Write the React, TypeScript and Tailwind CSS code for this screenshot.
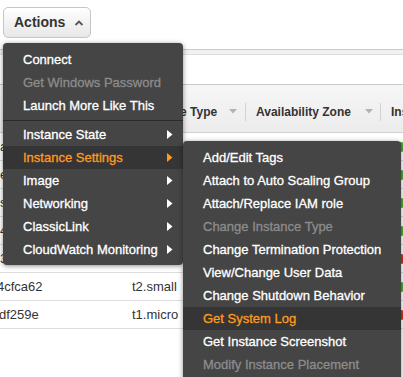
import React from "react";

type Item = { label: string; disabled?: boolean; active?: boolean; sub?: boolean };

const mainTop: Item[] = [
  { label: "Connect" },
  { label: "Get Windows Password", disabled: true },
  { label: "Launch More Like This" },
];

const mainBottom: Item[] = [
  { label: "Instance State", sub: true },
  { label: "Instance Settings", sub: true, active: true },
  { label: "Image", sub: true },
  { label: "Networking", sub: true },
  { label: "ClassicLink", sub: true },
  { label: "CloudWatch Monitoring", sub: true },
];

const settings: Item[] = [
  { label: "Add/Edit Tags" },
  { label: "Attach to Auto Scaling Group" },
  { label: "Attach/Replace IAM role" },
  { label: "Change Instance Type", disabled: true },
  { label: "Change Termination Protection" },
  { label: "View/Change User Data" },
  { label: "Change Shutdown Behavior" },
  { label: "Get System Log", active: true },
  { label: "Get Instance Screenshot" },
  { label: "Modify Instance Placement", disabled: true },
];

const rows = [
  { id: "a3e81b07", type: "t2.micro", state: "bg-[#3fae2a]" },
  { id: "e1d09c4b", type: "t2.micro", state: "bg-[#3fae2a]" },
  { id: "s7f2a9d1", type: "t2.medium", state: "bg-[#3fae2a]" },
  { id: "4b60e3aa", type: "t2.small", state: "bg-[#3fae2a]" },
  { id: "3c5d7e20", type: "t2.micro", state: "bg-[#d13212]" },
  { id: "4cfca62", type: "t2.small", state: "bg-[#3fae2a]", ml: "-ml-[3px]" },
  { id: "df259e", type: "t1.micro", state: "bg-[#d13212]", ml: "-ml-[1px]" },
];

function Arrow({ color }: { color: string }) {
  return (
    <svg width="6" height="9" viewBox="0 0 6 9">
      <polygon points="0,0 5.5,4.5 0,9" fill={color} />
    </svg>
  );
}

function Caret() {
  return (
    <svg width="8" height="5" viewBox="0 0 8 5">
      <polygon points="0,0 8,0 4,4.5" fill="#b3b3b3" />
    </svg>
  );
}

function MenuRow({ item }: { item: Item }) {
  const color = item.active ? "text-[#ff9a1f]" : item.disabled ? "text-[#8c8c8c]" : "text-white";
  return (
    <div
      className={`flex h-[23px] items-center justify-between pl-[20px] pr-[10px] text-[13px] ${color} ${
        item.active ? "bg-[#353535]" : ""
      }`}
    >
      <span className="whitespace-nowrap [-webkit-text-stroke:0.3px_currentColor]">{item.label}</span>
      {item.sub && <Arrow color={item.active ? "#ff9a1f" : "#ffffff"} />}
    </div>
  );
}

export default function App() {
  return (
    <div className="relative h-[377px] w-[403px] overflow-hidden bg-white font-['Liberation_Sans',Arial,sans-serif] text-[#333]">
      {/* toolbar */}
      <div className="pl-[3px] pt-[7px]">
        <button
          type="button"
          className="flex h-[31px] w-[88px] items-center rounded-[5px] border border-[#c6c6c6] bg-gradient-to-b from-white to-[#e7e7e7] pl-[10px] text-[14px] font-bold text-[#333]"
        >
          Actions
          <svg width="10" height="6" viewBox="0 0 10 6" className="ml-[9px] mt-[1px]">
            <polyline points="1.5,5 5,1.5 8.5,5" fill="none" stroke="#555" strokeWidth="1.8" />
          </svg>
        </button>
      </div>

      <div className="mt-[11px] h-[6px] border-y border-t-[#c9c9c9] border-b-[#dedede] bg-[#f1f1f1]" />
      <div className="h-[29px] bg-white" />

      {/* table header */}
      <div className="flex h-[49px] items-center border-y border-t-[#c9c9c9] border-b-[#d0d0d0] bg-gradient-to-b from-[#f6f6f6] to-[#ececec] pt-[6px] text-[12px] font-bold text-[#333]">
        <div className="w-[127px] shrink-0 pl-[8px]">Instance ID</div>
        <div className="flex w-[118px] shrink-0 items-center justify-between pl-[11px] pr-[8px]">
          <span>Instance Type</span>
          <Caret />
        </div>
        <div className="h-[18px] w-px shrink-0 bg-[#d2d2d2]" />
        <div className="flex w-[134px] shrink-0 items-center justify-between pl-[10px] pr-[7px]">
          <span className="whitespace-nowrap">Availability Zone</span>
          <Caret />
        </div>
        <div className="h-[18px] w-px shrink-0 bg-[#d2d2d2]" />
        <div className="whitespace-nowrap pl-[10px]">Instance State</div>
      </div>

      {/* table body */}
      <div className="text-[13px] text-[#333]">
        {rows.map((r) => (
          <div key={r.id} className="flex h-[28px] items-center border-b border-[#dddddd]">
            <div className="w-[132px] shrink-0 overflow-hidden">
              <div className={r.ml ?? ""}>{r.id}</div>
            </div>
            <div className="w-[264px] shrink-0">{r.type}</div>
            <div className={`h-[10px] w-[10px] shrink-0 rounded-full ${r.state}`} />
          </div>
        ))}
      </div>

      {/* actions menu */}
      <div className="absolute left-[3px] top-[43px] w-[180px] rounded-[4px] bg-[#454545] pb-[4px] pt-[5px] shadow-[0_1px_5px_rgba(0,0,0,0.45)]">
        {mainTop.map((i) => (
          <MenuRow key={i.label} item={i} />
        ))}
        <div className="flex h-[6px] items-center">
          <div className="h-px w-full bg-[#2a2a2a]" />
        </div>
        {mainBottom.map((i) => (
          <MenuRow key={i.label} item={i} />
        ))}

        {/* instance settings submenu */}
        <div className="absolute left-[180px] top-[98px] w-[218px] rounded-[4px] bg-[#454545] pb-[6px] pt-[5px] shadow-[0_1px_5px_rgba(0,0,0,0.45)]">
          {settings.map((i) => (
            <MenuRow key={i.label} item={i} />
          ))}
        </div>
      </div>
    </div>
  );
}
